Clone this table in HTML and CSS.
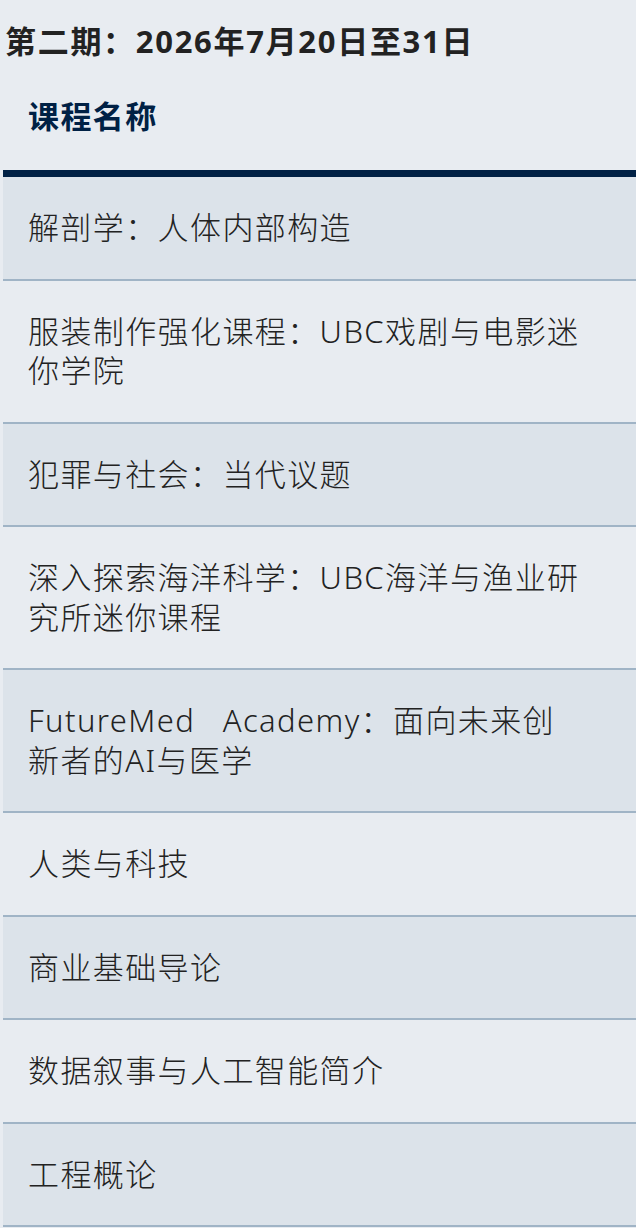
FILE: index.html
```html
<!DOCTYPE html>
<html lang="zh">
<head>
<meta charset="utf-8">
<link rel="stylesheet" href="styles.css">
</head>
<body>
<div class="page">
  <h2 class="session">第二期：2026年7月20日至31日</h2>
  <table class="courses">
    <thead>
      <tr><th>课程名称</th></tr>
    </thead>
    <tbody>
      <tr><td>解剖学：人体内部构造</td></tr>
      <tr><td>服装制作强化课程：UBC戏剧与电影迷你学院</td></tr>
      <tr><td>犯罪与社会：当代议题</td></tr>
      <tr><td>深入探索海洋科学：UBC海洋与渔业研究所迷你课程</td></tr>
      <tr><td>FutureMed Academy：面向未来创新者的AI与医学</td></tr>
      <tr><td>人类与科技</td></tr>
      <tr><td>商业基础导论</td></tr>
      <tr><td>数据叙事与人工智能简介</td></tr>
      <tr><td>工程概论</td></tr>
    </tbody>
  </table>
</div>
</body>
</html>
```

FILE: styles.css
```css
html, body {
  margin: 0;
  padding: 0;
  background: #e8ecf1;
}
body {
  font-family: "Noto Sans", "Noto Sans CJK SC", sans-serif;
  color: #222;
  overflow: hidden;
}
.page {
  padding-left: 3px;
  width: 640px;
}
.session {
  margin: 0 0 0 2px;
  padding-top: 22px;
  font-size: 31px;
  line-height: 38px;
  font-weight: 700;
  letter-spacing: 1.7px;
  color: #222;
}
.courses {
  border-collapse: collapse;
  width: 100%;
  margin-top: 7px;
}
.courses th {
  text-align: left;
  font-size: 31px;
  line-height: 38px;
  font-weight: 700;
  letter-spacing: 1.4px;
  color: #002145;
  padding: 30px 59px 35px 25px;
  border-bottom: 7px solid #002145;
}
.courses td {
  font-size: 31px;
  line-height: 39.5px;
  font-weight: 300;
  letter-spacing: 1.4px;
  word-spacing: 18px;
  padding: 31px 59px 31px 25px;
  border-bottom: 2px solid #a0b4c6;
}
.courses tbody tr:nth-child(odd) td {
  background: #dce3ea;
}
.courses tbody tr:nth-child(even) td {
  background: #e8ecf1;
}
```
